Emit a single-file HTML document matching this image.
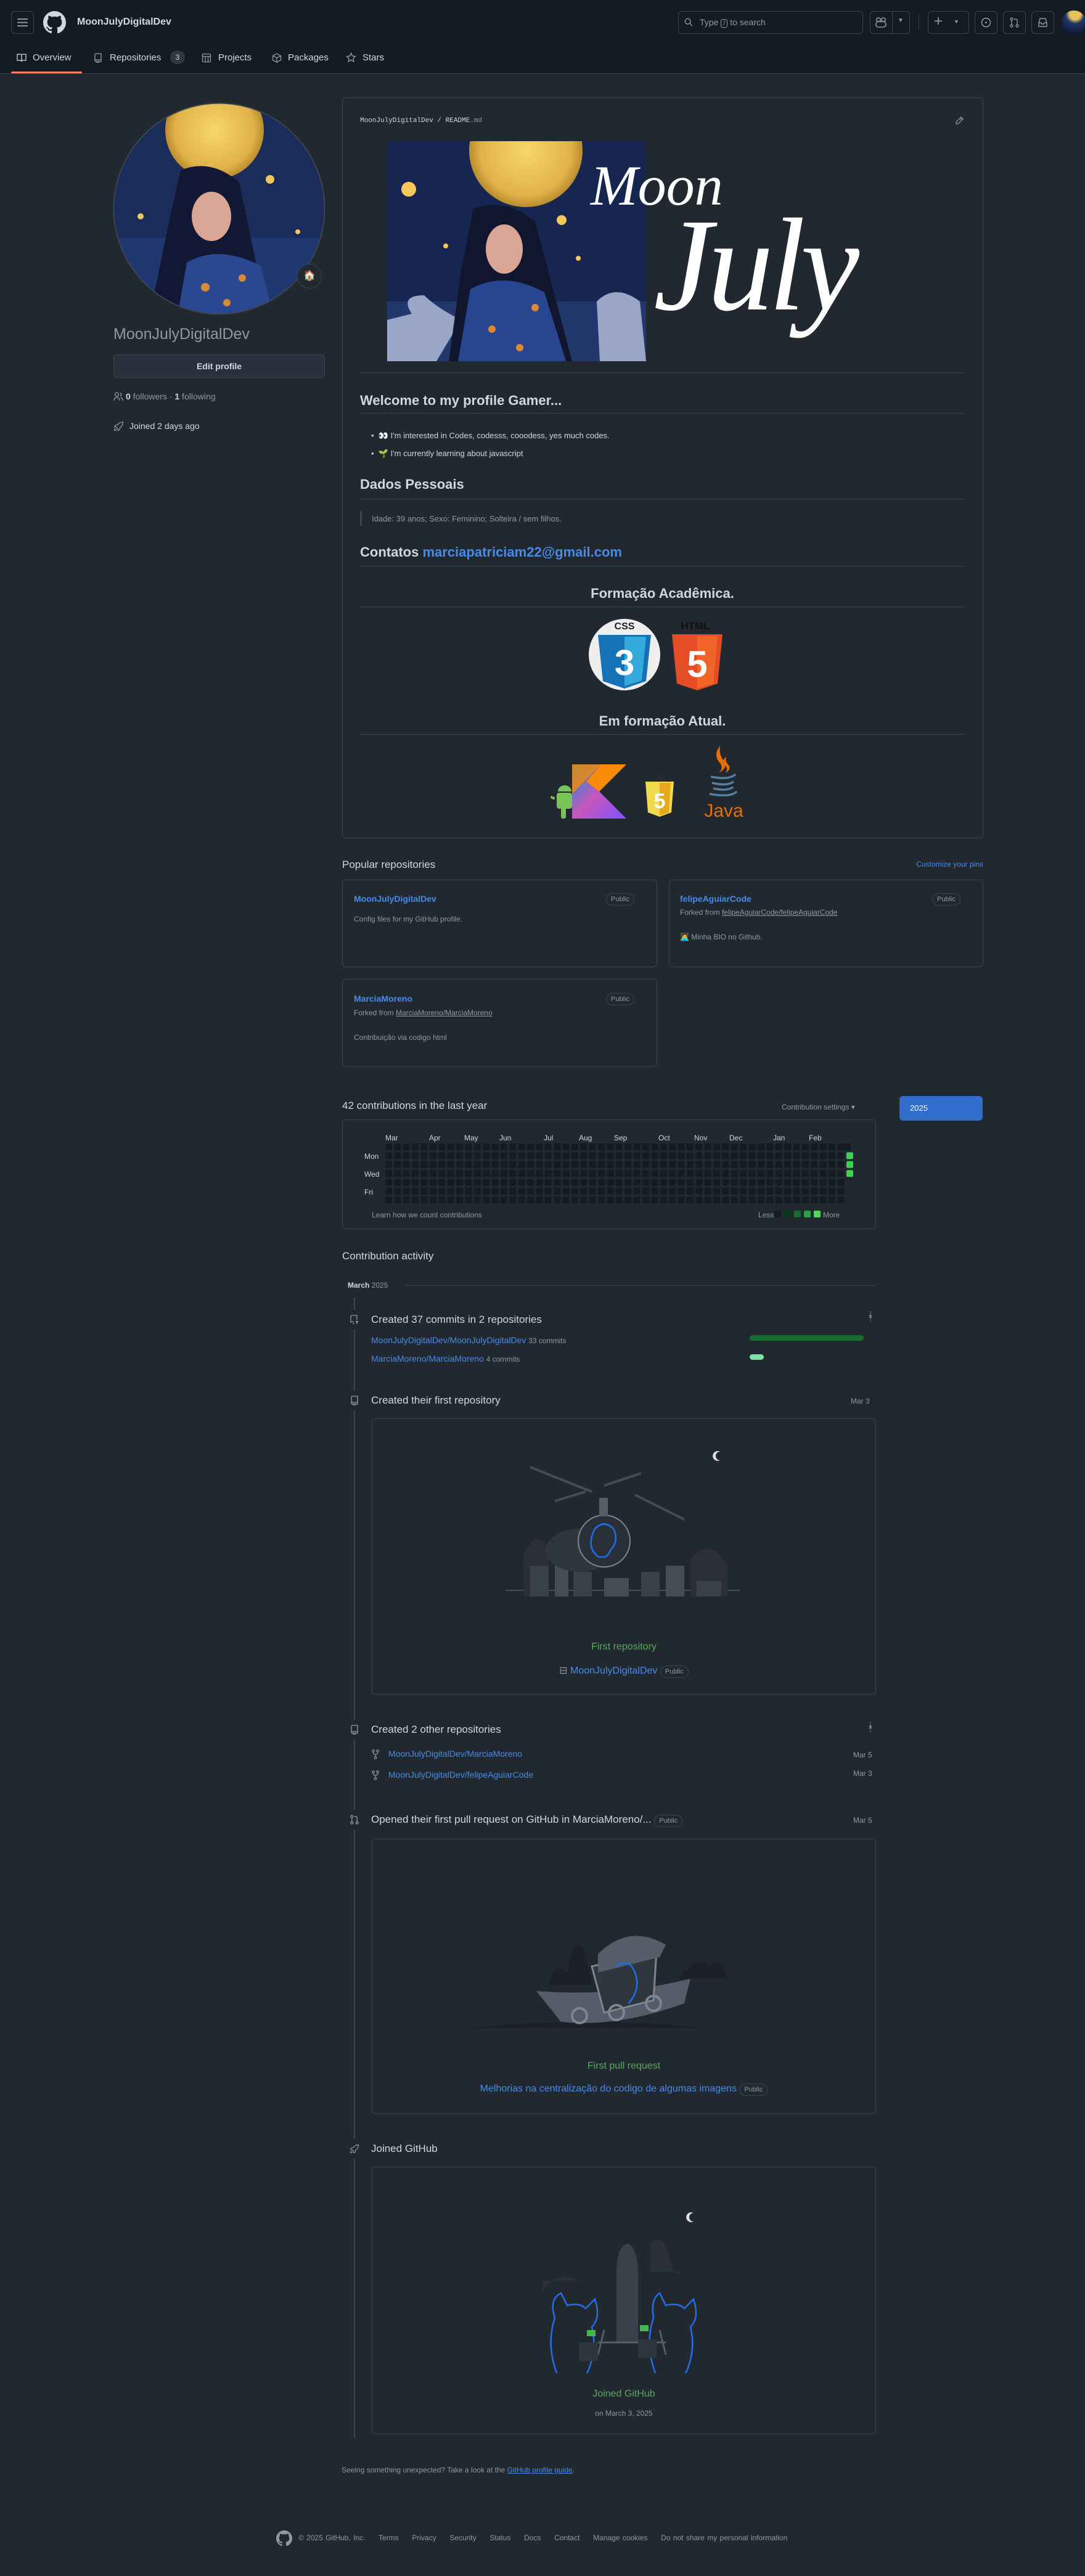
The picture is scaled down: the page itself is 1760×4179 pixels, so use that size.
<!DOCTYPE html>
<html><head><meta charset="utf-8">
<style>
*{box-sizing:border-box;margin:0;padding:0}
body{width:1760px;height:4179px;background:#212830;font-family:"Liberation Sans",sans-serif;color:#d1d7e0;position:relative;overflow:hidden}
.a{position:absolute}
a,.lnk{color:#478be6;text-decoration:none}
.muted{color:#9198a1}
.btn{border:1px solid #3d444d;border-radius:6px}
.box{border:1px solid #3d444d;border-radius:6px}
.badge{border:1px solid #3d444d;border-radius:12px;font-size:11px;color:#9198a1;padding:3px 7px}
.hr{position:absolute;height:1px;background:#3d444d}
.ti{position:absolute;width:32px;height:32px;border-radius:50%;background:#212830;left:559px}
</style></head><body>

<!-- header -->
<div class="a" style="left:0;top:0;width:1760px;height:120px;background:#151b23;border-bottom:1px solid #3d444d"></div>
<div class="a btn" style="left:18px;top:18px;width:37px;height:37px"></div>
<svg class="a" style="left:28px;top:29px" width="17" height="15" viewBox="0 0 17 15"><rect y="1" width="17" height="2" rx="1" fill="#9198a1"/><rect y="6.5" width="17" height="2" rx="1" fill="#9198a1"/><rect y="12" width="17" height="2" rx="1" fill="#9198a1"/></svg>
<svg class="a" style="left:70px;top:18px" width="37" height="37" viewBox="0 0 16 16"><path fill="#d1d7e0" d="M8 0C3.58 0 0 3.58 0 8c0 3.54 2.290 6.530 5.470 7.590.4.07.55-.17.55-.38 0-.19-.01-.82-.01-1.490-2.010.37-2.530-.49-2.690-.94-.09-.23-.48-.94-.82-1.130-.28-.15-.68-.52-.01-.53.63-.01 1.080.58 1.230.82.72 1.210 1.870.87 2.330.66.07-.52.28-.87.51-1.070-1.780-.2-3.640-.89-3.640-3.950 0-.87.31-1.590.82-2.150-.08-.2-.36-1.020.08-2.120 0 0 .67-.21 2.200.82.64-.18 1.320-.27 2-.27.68 0 1.360.09 2 .27 1.530-1.040 2.200-.82 2.200-.82.44 1.100.16 1.920.08 2.120.51.56.82 1.270.82 2.150 0 3.070-1.870 3.750-3.650 3.950.29.25.54.73.54 1.480 0 1.070-.01 1.930-.01 2.200 0 .21.15.46.55.38A8.013 8.013 0 0016 8c0-4.420-3.580-8-8-8z"/></svg>
<div class="a" style="left:125px;top:27px;font-size:16px;font-weight:bold;color:#d1d7e0">MoonJulyDigitalDev</div>
<div class="a btn" style="left:1100px;top:18px;width:300px;height:37px"></div>
<svg class="a" style="left:1110px;top:29px" width="14" height="14" viewBox="0 0 16 16"><circle cx="6.5" cy="6.5" r="5" stroke="#9198a1" stroke-width="1.6" fill="none"/><path d="M10.5 10.5 15 15" stroke="#9198a1" stroke-width="1.6"/></svg>
<div class="a muted" style="left:1135px;top:28px;font-size:14px">Type <span style="border:1px solid #9198a1;border-radius:3px;padding:0 3px;font-size:11px">/</span> to search</div>
<div class="a btn" style="left:1411px;top:18px;width:65px;height:37px"></div>
<div class="a" style="left:1447px;top:18px;width:1px;height:37px;background:#3d444d"></div>
<svg class="a" style="left:1420px;top:28px" width="18" height="17" viewBox="0 0 18 17"><rect x="2" y="1" width="6" height="6" rx="2.5" stroke="#9198a1" stroke-width="1.6" fill="none"/><rect x="10" y="1" width="6" height="6" rx="2.5" stroke="#9198a1" stroke-width="1.6" fill="none"/><rect x="1" y="7" width="16" height="9" rx="4" stroke="#9198a1" stroke-width="1.6" fill="none"/></svg>
<div class="a muted" style="left:1456px;top:28px;font-size:10px">▼</div>
<div class="a" style="left:1490px;top:25px;width:1px;height:23px;background:#3d444d"></div>
<div class="a btn" style="left:1505px;top:18px;width:67px;height:37px"></div>
<div class="a muted" style="left:1515px;top:21px;font-size:24px">+</div>
<div class="a muted" style="left:1547px;top:30px;font-size:9px">▼</div>
<div class="a btn" style="left:1581px;top:18px;width:37px;height:37px"></div>
<svg class="a" style="left:1591px;top:28px" width="17" height="17"><circle cx="8.5" cy="8.5" r="7" stroke="#9198a1" stroke-width="1.5" fill="none"/><circle cx="8.5" cy="8.5" r="1.5" fill="#9198a1"/></svg>
<div class="a btn" style="left:1627px;top:18px;width:37px;height:37px"></div>
<svg class="a" style="left:1637px;top:28px" width="17" height="17" viewBox="0 0 17 17"><circle cx="4" cy="3" r="2" stroke="#9198a1" stroke-width="1.4" fill="none"/><circle cx="4" cy="14" r="2" stroke="#9198a1" stroke-width="1.4" fill="none"/><circle cx="13" cy="14" r="2" stroke="#9198a1" stroke-width="1.4" fill="none"/><path d="M4 5v7M13 12V5.5Q13 3 10 3H8" stroke="#9198a1" stroke-width="1.4" fill="none"/></svg>
<div class="a btn" style="left:1673px;top:18px;width:37px;height:37px"></div>
<svg class="a" style="left:1683px;top:28px" width="17" height="17" viewBox="0 0 17 17"><path d="M2 9 4 2h9l2 7v6H2z M2 9h4l1 2h3l1-2h4" stroke="#9198a1" stroke-width="1.4" fill="none"/></svg>
<div class="a" style="left:1722px;top:17px;width:40px;height:40px;border-radius:50%;background:radial-gradient(circle at 55% 15%,#e8c35a 0 22%,#1f3566 38%,#0f1a35 80%)"></div>

<!-- tabs -->
<svg class="a" style="left:27px;top:86px" width="16" height="16" viewBox="0 0 16 16"><path d="M1 2h5a2 2 0 0 1 2 2v10a2 2 0 0 0-2-2H1zM15 2h-5a2 2 0 0 0-2 2v10a2 2 0 0 1 2-2h5z" stroke="#d1d7e0" stroke-width="1.3" fill="none"/></svg>
<div class="a" style="left:53px;top:85px;font-size:15px;color:#d1d7e0">Overview</div>
<svg class="a" style="left:151px;top:86px" width="16" height="16" viewBox="0 0 16 16"><path d="M3 13V2.5A1.5 1.5 0 0 1 4.5 1H13v10H4.5A1.5 1.5 0 0 0 3 12.5 1.5 1.5 0 0 0 4.5 14H6M9 14h4v-3M6 12v4l1.5-1 1.5 1v-4" stroke="#9198a1" stroke-width="1.3" fill="none"/></svg>
<div class="a" style="left:178px;top:85px;font-size:15px;color:#d1d7e0">Repositories</div>
<div class="a" style="left:276px;top:82px;width:24px;height:22px;border-radius:11px;background:#2f3742;font-size:12px;text-align:center;line-height:22px">3</div>
<svg class="a" style="left:327px;top:86px" width="16" height="16" viewBox="0 0 16 16"><rect x="1.5" y="1.5" width="13" height="13" rx="1.5" stroke="#9198a1" stroke-width="1.3" fill="none"/><path d="M1.5 5.5h13M6 5.5v9M10.5 5.5v9" stroke="#9198a1" stroke-width="1.3"/></svg>
<div class="a" style="left:354px;top:85px;font-size:15px;color:#d1d7e0">Projects</div>
<svg class="a" style="left:441px;top:86px" width="16" height="16" viewBox="0 0 16 16"><path d="M8 1 14.5 4.5v7L8 15 1.5 11.5v-7zM1.5 4.5 8 8l6.5-3.5M8 8v7" stroke="#9198a1" stroke-width="1.3" fill="none"/></svg>
<div class="a" style="left:467px;top:85px;font-size:15px;color:#d1d7e0">Packages</div>
<svg class="a" style="left:561px;top:85px" width="17" height="17" viewBox="0 0 16 16"><path d="M8 1.2l2 4.3 4.6.6-3.4 3.2.9 4.6L8 11.6l-4.1 2.3.9-4.6L1.4 6.1 6 5.5z" stroke="#9198a1" stroke-width="1.3" fill="none"/></svg>
<div class="a" style="left:588px;top:85px;font-size:15px;color:#d1d7e0">Stars</div>
<div class="a" style="left:18px;top:116px;width:115px;height:3px;background:#f78166;border-radius:2px"></div>

<!-- left column -->
<svg class="a" style="left:183px;top:166px" width="345" height="345" viewBox="0 0 345 345">
<defs><clipPath id="cav"><circle cx="172.5" cy="172.5" r="171"/></clipPath>
<radialGradient id="mn" cx="0.5" cy="0.5" r="0.5"><stop offset="0" stop-color="#f8d76a"/><stop offset="0.8" stop-color="#e0b24a"/><stop offset="1" stop-color="#b98c2e"/></radialGradient></defs>
<g clip-path="url(#cav)">
<rect width="345" height="345" fill="#1a2c5a"/>
<rect y="220" width="345" height="125" fill="#1f3870"/>
<circle cx="165" cy="45" r="80" fill="url(#mn)"/>
<circle cx="255" cy="125" r="7" fill="#f0c75a"/><circle cx="45" cy="185" r="5" fill="#f0c75a"/><circle cx="90" cy="270" r="4" fill="#f0c75a"/><circle cx="300" cy="210" r="4" fill="#f0c75a"/>
<path d="M110 110 Q160 90 205 130 L250 345 L60 345 L90 200 Z" fill="#121833"/>
<ellipse cx="160" cy="185" rx="32" ry="40" fill="#d9a594"/>
<path d="M120 160 Q160 115 205 160 L200 135 Q160 100 120 135Z" fill="#121833"/>
<path d="M120 260 Q170 230 240 265 L260 345 L105 345Z" fill="#2a4890"/>
<circle cx="150" cy="300" r="7" fill="#d98a36"/><circle cx="210" cy="285" r="6" fill="#d98a36"/><circle cx="185" cy="325" r="6" fill="#d98a36"/>
</g><circle cx="172.5" cy="172.5" r="171" fill="none" stroke="#3d444d" stroke-width="2"/></svg>
<div class="a" style="left:482px;top:428px;width:40px;height:40px;border-radius:50%;background:#212830;border:1px solid #3d444d;text-align:center;line-height:38px;font-size:16px">🏠</div>
<div class="a" style="left:184px;top:528px;font-size:25px;color:#9198a1;font-weight:300">MoonJulyDigitalDev</div>
<div class="a btn" style="left:184px;top:575px;width:343px;height:38px;background:#2a313c;text-align:center;line-height:36px;font-size:14px;font-weight:bold">Edit profile</div>
<svg class="a" style="left:184px;top:636px" width="16" height="15" viewBox="0 0 16 15"><circle cx="5.5" cy="4" r="3" stroke="#9198a1" stroke-width="1.3" fill="none"/><path d="M1 14q0-5 4.5-5t4.5 5M11 1.5a3 3 0 0 1 0 5.5M12 9q3 1 3 5" stroke="#9198a1" stroke-width="1.3" fill="none"/></svg>
<div class="a muted" style="left:204px;top:635px;font-size:14px"><b style="color:#d1d7e0">0</b> followers · <b style="color:#d1d7e0">1</b> following</div>
<svg class="a" style="left:184px;top:683px" width="17" height="17" viewBox="0 0 16 16"><path d="M14.5 1.5Q9 1.5 6 6L3 6.5 1.5 9l3 .5 2 2 .5 3 2.5-1.5.5-3q4.5-3 4.5-8.5zM3.5 11q-2 1-2 3.5 2.5 0 3.5-2" stroke="#9198a1" stroke-width="1.2" fill="none"/></svg>
<div class="a" style="left:210px;top:683px;font-size:14px;color:#d1d7e0">Joined 2 days ago</div>

<!-- README box -->
<div class="a box" style="left:555px;top:158px;width:1040px;height:1202px"></div>
<div class="a" style="left:584px;top:190px;font-family:'Liberation Mono',monospace;font-size:11px;color:#d1d7e0">MoonJulyDigitalDev / README<span class="muted">.md</span></div>
<svg class="a" style="left:1548px;top:188px" width="16" height="16" viewBox="0 0 16 16"><path d="M11 2l3 3-8 8H3v-3z M9.5 3.5l3 3" stroke="#9198a1" stroke-width="1.3" fill="none"/></svg>
<svg class="a" style="left:628px;top:229px" width="420" height="357" viewBox="0 0 420 357">
<rect width="420" height="357" fill="#172650"/>
<rect y="260" width="420" height="97" fill="#22376c"/>
<circle cx="225" cy="15" r="92" fill="url(#mn)"/>
<circle cx="35" cy="78" r="12" fill="#f5c85a"/><circle cx="283" cy="128" r="8" fill="#f5c85a"/><circle cx="95" cy="170" r="4" fill="#f5c85a"/><circle cx="310" cy="190" r="4" fill="#f5c85a"/>
<path d="M40 280 Q20 250 60 250 Q80 270 120 290 L80 357 L0 357 L0 290Z" fill="#9aa6c8"/>
<path d="M340 260 Q370 230 410 260 L420 357 L345 357Z" fill="#9aa6c8"/>
<path d="M140 110 Q190 90 240 130 L300 357 L100 357 L120 210Z" fill="#11162e"/>
<ellipse cx="190" cy="175" rx="30" ry="40" fill="#d9a594"/>
<path d="M150 155 Q190 110 235 155 L230 130 Q190 95 150 130Z" fill="#11162e"/>
<path d="M135 240 Q190 210 255 245 L290 357 L115 357Z" fill="#28468f"/>
<circle cx="170" cy="305" r="6" fill="#d98a36"/><circle cx="240" cy="270" r="6" fill="#d98a36"/><circle cx="215" cy="335" r="6" fill="#d98a36"/>
</svg>
<div class="a" style="left:958px;top:255px;font-family:'Liberation Serif',serif;font-style:italic;font-size:92px;color:#fff;line-height:1">Moon</div>
<div class="a" style="left:1060px;top:322px;font-family:'Liberation Serif',serif;font-style:italic;font-size:215px;color:#fff;line-height:1;letter-spacing:-8px">July</div>
<div class="hr" style="left:584px;top:604px;width:981px"></div>
<div class="a" style="left:584px;top:637px;font-size:22px;font-weight:bold;color:#d1d7e0">Welcome to my profile Gamer...</div>
<div class="hr" style="left:584px;top:670px;width:981px"></div>
<div class="a" style="left:602px;top:692px;font-size:13px;line-height:29px;color:#d1d7e0">• &nbsp;👀 I'm interested in Codes, codesss, cooodess, yes much codes.<br>• &nbsp;🌱 I'm currently learning about javascript</div>
<div class="a" style="left:584px;top:773px;font-size:22px;font-weight:bold">Dados Pessoais</div>
<div class="hr" style="left:584px;top:809px;width:981px"></div>
<div class="a" style="left:584px;top:829px;width:3px;height:24px;background:#3d444d"></div>
<div class="a muted" style="left:603px;top:834px;font-size:13px">Idade: 39 anos; Sexo: Feminino; Solteira / sem filhos.</div>
<div class="a" style="left:584px;top:883px;font-size:22px;font-weight:bold">Contatos <span class="lnk" style="font-weight:bold">marciapatriciam22@gmail.com</span></div>
<div class="hr" style="left:584px;top:918px;width:981px"></div>
<div class="a" style="left:584px;top:950px;width:981px;text-align:center;font-size:22px;font-weight:bold">Formação Acadêmica.</div>
<div class="hr" style="left:584px;top:984px;width:981px"></div>
<svg class="a" style="left:955px;top:1003px" width="225" height="118" viewBox="0 0 225 118">
<ellipse cx="58" cy="59" rx="58" ry="58" fill="#eee"/>
<text x="58" y="18" text-anchor="middle" font-family="Liberation Sans" font-weight="bold" font-size="16" fill="#222">CSS</text>
<path d="M15 27h86l-8 75-35 12-35-12z" fill="#1572b6"/><path d="M58 30v80l28-9 7-71z" fill="#33a9dc"/>
<text x="58" y="92" text-anchor="middle" font-family="Liberation Sans" font-weight="bold" font-size="58" fill="#fff">3</text>
<text x="173" y="18" text-anchor="middle" font-family="Liberation Sans" font-weight="bold" font-size="17" fill="#111">HTML</text>
<path d="M135 26h82l-8 80-33 11-33-11z" fill="#e44d26"/><path d="M176 29v85l26-8 7-77z" fill="#f16529"/>
<text x="176" y="95" text-anchor="middle" font-family="Liberation Sans" font-weight="bold" font-size="60" fill="#fff">5</text>
</svg>
<div class="a" style="left:584px;top:1157px;width:981px;text-align:center;font-size:22px;font-weight:bold">Em formação Atual.</div>
<div class="hr" style="left:584px;top:1191px;width:981px"></div>
<svg class="a" style="left:893px;top:1208px" width="335" height="122" viewBox="0 0 335 122">
<defs><linearGradient id="kt" x1="0" y1="0" x2="1" y2="1"><stop offset="0" stop-color="#0095d5"/><stop offset="0.5" stop-color="#c757bc"/><stop offset="1" stop-color="#7f52ff"/></linearGradient></defs>
<path d="M35 32h88L79 76l44 44H35z" fill="url(#kt)"/><path d="M35 32h47L35 80z" fill="#f88909" opacity=".8"/><path d="M82 32h41L79 76 58 60z" fill="#f88909"/>
<rect x="10" y="78" width="25" height="26" rx="4" fill="#78c257"/><path d="M12 76a11 10 0 0 1 22 0z" fill="#78c257"/><rect x="0" y="84" width="7" height="4" fill="#78c257" transform="rotate(25 3 86)"/><rect x="17" y="100" width="8" height="20" rx="3" fill="#78c257"/>
<path d="M154 60h46l-4 50-19 7-19-7z" fill="#f0db4f"/><path d="M177 62v53l15-5 3-48z" fill="#e6a91d"/>
<text x="177" y="103" text-anchor="middle" font-family="Liberation Sans" font-weight="bold" font-size="34" fill="#fff">5</text>
<text x="177" y="57" text-anchor="middle" font-family="Liberation Sans" font-weight="bold" font-size="9" fill="#333">JS</text>
<path d="M275 2q-12 15 0 28 6 8-2 16 16-9 8-20-8-9-6-24z" fill="#e76f00"/><path d="M285 20q-10 7 0 16 3 5-2 10 12-6 5-14-5-5-3-12z" fill="#e76f00"/>
<path d="M260 52q30 6 40-4M262 62q25 6 35-2M264 71q22 5 32-2M258 80q35 6 44-4" stroke="#5382a1" stroke-width="3.5" fill="none"/>
<text x="281" y="117" text-anchor="middle" font-family="Liberation Sans" font-size="30" fill="#e76f00">Java</text>
</svg>

<!-- Popular repos -->
<div class="a" style="left:555px;top:1393px;font-size:17px;color:#d1d7e0">Popular repositories</div>
<div class="a lnk" style="left:1400px;top:1395px;width:195px;text-align:right;font-size:12px">Customize your pins</div>
<div class="a box" style="left:555px;top:1427px;width:511px;height:142px"></div>
<div class="a lnk" style="left:574px;top:1450px;font-size:14px;font-weight:bold">MoonJulyDigitalDev</div>
<div class="a badge" style="left:983px;top:1449px">Public</div>
<div class="a muted" style="left:574px;top:1484px;font-size:12px">Config files for my GitHub profile.</div>
<div class="a box" style="left:1085px;top:1427px;width:510px;height:142px"></div>
<div class="a lnk" style="left:1103px;top:1450px;font-size:14px;font-weight:bold">felipeAguiarCode</div>
<div class="a badge" style="left:1512px;top:1449px">Public</div>
<div class="a muted" style="left:1103px;top:1473px;font-size:12px">Forked from <span style="text-decoration:underline">felipeAguiarCode/felipeAguiarCode</span></div>
<div class="a muted" style="left:1103px;top:1513px;font-size:12px">👩‍💻 Minha BIO no Github.</div>
<div class="a box" style="left:555px;top:1588px;width:511px;height:143px"></div>
<div class="a lnk" style="left:574px;top:1612px;font-size:14px;font-weight:bold">MarciaMoreno</div>
<div class="a badge" style="left:983px;top:1611px">Public</div>
<div class="a muted" style="left:574px;top:1636px;font-size:12px">Forked from <span style="text-decoration:underline">MarciaMoreno/MarciaMoreno</span></div>
<div class="a muted" style="left:574px;top:1676px;font-size:12px">Contribuição via codigo html</div>

<!-- contributions -->
<div class="a" style="left:555px;top:1784px;font-size:17px">42 contributions in the last year</div>
<div class="a muted" style="left:1268px;top:1789px;font-size:12px">Contribution settings ▾</div>
<div class="a" style="left:1459px;top:1778px;width:135px;height:40px;background:#316dca;border-radius:6px;color:#fff;font-size:13px;padding:12px 17px">2025</div>
<div class="a box" style="left:555px;top:1816px;width:866px;height:178px"></div>
<svg class="a" style="left:580px;top:1832px" width="830" height="150">
<defs><pattern id="cell" x="45" y="23" width="14.38" height="14.38" patternUnits="userSpaceOnUse"><rect width="11" height="11" rx="2" fill="#151b23"/></pattern></defs>
<g font-family="Liberation Sans" font-size="12" fill="#d1d7e0">
<text x="45" y="18">Mar</text><text x="116" y="18">Apr</text><text x="173" y="18">May</text><text x="230" y="18">Jun</text><text x="302" y="18">Jul</text><text x="359" y="18">Aug</text><text x="416" y="18">Sep</text><text x="488" y="18">Oct</text><text x="546" y="18">Nov</text><text x="603" y="18">Dec</text><text x="674" y="18">Jan</text><text x="732" y="18">Feb</text>
<text x="11" y="48">Mon</text><text x="11" y="77">Wed</text><text x="11" y="106">Fri</text></g>
<rect x="45" y="23" width="748" height="101" fill="url(#cell)"/>
<rect x="789" y="23" width="14" height="14" fill="#212830"/>
<rect x="789" y="23" width="11" height="11" rx="2" fill="#151b23"/>
<rect x="793" y="37.4" width="11" height="11" rx="2" fill="#39d353"/><rect x="793" y="51.8" width="11" height="11" rx="2" fill="#39d353"/><rect x="793" y="66.2" width="11" height="11" rx="2" fill="#39d353"/>
<text x="23" y="143" font-family="Liberation Sans" font-size="12" fill="#9198a1">Learn how we count contributions</text>
<text x="650" y="143" font-family="Liberation Sans" font-size="12" fill="#9198a1">Less</text>
<rect x="676" y="132" width="11" height="11" rx="2" fill="#151b23"/><rect x="692" y="132" width="11" height="11" rx="2" fill="#033a16"/><rect x="708" y="132" width="11" height="11" rx="2" fill="#196c2e"/><rect x="724" y="132" width="11" height="11" rx="2" fill="#2ea043"/><rect x="740" y="132" width="11" height="11" rx="2" fill="#56d364"/>
<text x="755" y="143" font-family="Liberation Sans" font-size="12" fill="#9198a1">More</text>
</svg>

<!-- activity -->
<div class="a" style="left:555px;top:2028px;font-size:17px">Contribution activity</div>
<div class="a" style="left:564px;top:2078px;font-size:12px;font-weight:bold">March <span class="muted" style="font-weight:normal">2025</span></div>
<div class="hr" style="left:658px;top:2085px;width:763px"></div>
<div class="a" style="left:574px;top:2105px;width:2px;height:1850px;background:#3d444d"></div>

<div class="ti" style="top:2125px"></div>
<svg class="a" style="left:567px;top:2133px" width="16" height="16" viewBox="0 0 16 16"><path d="M2 13V2.5A1.5 1.5 0 0 1 3.5 1H12v7M2 12.5A1.5 1.5 0 0 1 3.5 11H7M5 14h3M12 15V10M10 12l2-2 2 2" stroke="#9198a1" stroke-width="1.3" fill="none"/></svg>
<div class="a" style="left:602px;top:2131px;font-size:17px">Created 37 commits in 2 repositories</div>
<div class="a muted" style="left:1407px;top:2128px;font-size:12px;line-height:8px">⇣<br>⇡</div>
<div class="a lnk" style="left:602px;top:2166px;font-size:14px">MoonJulyDigitalDev/MoonJulyDigitalDev <span class="muted" style="font-size:12px">33 commits</span></div>
<div class="a" style="left:1216px;top:2166px;width:185px;height:9px;border-radius:5px;background:#196c2e"></div>
<div class="a lnk" style="left:602px;top:2196px;font-size:14px">MarciaMoreno/MarciaMoreno <span class="muted" style="font-size:12px">4 commits</span></div>
<div class="a" style="left:1216px;top:2197px;width:23px;height:9px;border-radius:5px;background:#7ee2a8"></div>

<div class="ti" style="top:2256px"></div>
<svg class="a" style="left:567px;top:2264px" width="16" height="16" viewBox="0 0 16 16"><path d="M3 13V2.5A1.5 1.5 0 0 1 4.5 1H13v10H4.5A1.5 1.5 0 0 0 3 12.5 1.5 1.5 0 0 0 4.5 14H6M9 14h4v-3M6 12v4l1.5-1 1.5 1v-4" stroke="#9198a1" stroke-width="1.3" fill="none"/></svg>
<div class="a" style="left:602px;top:2262px;font-size:17px">Created their first repository</div>
<div class="a muted" style="left:1380px;top:2266px;font-size:12px">Mar 3</div>
<div class="a box" style="left:603px;top:2301px;width:818px;height:448px"></div>
<svg class="a" style="left:800px;top:2350px" width="400" height="260" viewBox="0 0 400 260">
<path d="M368 5a8 8 0 1 0 0 14 6 6 0 1 1 0-14z" fill="#ddd"/>
<path d="M20 230h390" stroke="#444c56" stroke-width="2"/>
<path d="M50 240V170q20-40 40-10v80zM320 240V180q30-40 60 10v50z" fill="#2b3038"/>
<rect x="60" y="190" width="30" height="50" fill="#3a414b"/><rect x="100" y="180" width="22" height="60" fill="#444c56"/><rect x="130" y="200" width="30" height="40" fill="#3a414b"/><rect x="180" y="210" width="40" height="30" fill="#444c56"/><rect x="240" y="200" width="30" height="40" fill="#3a414b"/><rect x="280" y="190" width="30" height="50" fill="#444c56"/><rect x="330" y="215" width="40" height="25" fill="#3a414b"/>
<path d="M60 30l100 40M180 60l60-20M230 75l80 40M100 85l50-15" stroke="#444c56" stroke-width="4"/>
<ellipse cx="140" cy="165" rx="55" ry="35" fill="#30363d"/>
<circle cx="180" cy="150" r="42" fill="#2a3039" stroke="#7d8590" stroke-width="2"/>
<path d="M165 130q15-15 30 0q10 20-5 35q-5 15-20 10q-20-15-5-45z" stroke="#1f6feb" stroke-width="2.5" fill="none"/>
<rect x="172" y="80" width="14" height="30" fill="#545d68"/>
</svg>
<div class="a" style="left:603px;top:2663px;width:818px;text-align:center;font-size:16px;color:#57ab5a">First repository</div>
<div class="a" style="left:603px;top:2700px;width:818px;text-align:center;font-size:16px"><span class="muted">⊟</span> <span class="lnk">MoonJulyDigitalDev</span> <span class="badge">Public</span></div>

<div class="ti" style="top:2790px"></div>
<svg class="a" style="left:567px;top:2798px" width="16" height="16" viewBox="0 0 16 16"><path d="M3 13V2.5A1.5 1.5 0 0 1 4.5 1H13v10H4.5A1.5 1.5 0 0 0 3 12.5 1.5 1.5 0 0 0 4.5 14H6M9 14h4v-3M6 12v4l1.5-1 1.5 1v-4" stroke="#9198a1" stroke-width="1.3" fill="none"/></svg>
<div class="a" style="left:602px;top:2796px;font-size:17px">Created 2 other repositories</div>
<div class="a muted" style="left:1407px;top:2794px;font-size:12px;line-height:8px">⇣<br>⇡</div>
<svg class="a" style="left:603px;top:2838px" width="12" height="16" viewBox="0 0 12 16"><circle cx="2.5" cy="2.5" r="1.8" stroke="#9198a1" stroke-width="1.2" fill="none"/><circle cx="9.5" cy="2.5" r="1.8" stroke="#9198a1" stroke-width="1.2" fill="none"/><circle cx="6" cy="13.5" r="1.8" stroke="#9198a1" stroke-width="1.2" fill="none"/><path d="M2.5 4.5v1.5q0 2 3.5 2t3.5-2V4.5M6 8v3.5" stroke="#9198a1" stroke-width="1.2" fill="none"/></svg>
<div class="a lnk" style="left:630px;top:2837px;font-size:14px">MoonJulyDigitalDev/MarciaMoreno</div>
<div class="a muted" style="left:1384px;top:2840px;font-size:12px">Mar 5</div>
<svg class="a" style="left:603px;top:2872px" width="12" height="16" viewBox="0 0 12 16"><circle cx="2.5" cy="2.5" r="1.8" stroke="#9198a1" stroke-width="1.2" fill="none"/><circle cx="9.5" cy="2.5" r="1.8" stroke="#9198a1" stroke-width="1.2" fill="none"/><circle cx="6" cy="13.5" r="1.8" stroke="#9198a1" stroke-width="1.2" fill="none"/><path d="M2.5 4.5v1.5q0 2 3.5 2t3.5-2V4.5M6 8v3.5" stroke="#9198a1" stroke-width="1.2" fill="none"/></svg>
<div class="a lnk" style="left:630px;top:2871px;font-size:14px">MoonJulyDigitalDev/felipeAguiarCode</div>
<div class="a muted" style="left:1384px;top:2870px;font-size:12px">Mar 3</div>

<div class="ti" style="top:2936px"></div>
<svg class="a" style="left:567px;top:2944px" width="16" height="16" viewBox="0 0 17 17"><circle cx="4" cy="3" r="2" stroke="#9198a1" stroke-width="1.4" fill="none"/><circle cx="4" cy="14" r="2" stroke="#9198a1" stroke-width="1.4" fill="none"/><circle cx="13" cy="14" r="2" stroke="#9198a1" stroke-width="1.4" fill="none"/><path d="M4 5v7M13 12V5.5Q13 3 10 3H8" stroke="#9198a1" stroke-width="1.4" fill="none"/></svg>
<div class="a" style="left:602px;top:2942px;font-size:17px">Opened their first pull request on GitHub in MarciaMoreno/... <span class="badge">Public</span></div>
<div class="a muted" style="left:1384px;top:2946px;font-size:12px">Mar 5</div>
<div class="a box" style="left:603px;top:2983px;width:818px;height:447px"></div>
<svg class="a" style="left:750px;top:3060px" width="430" height="230" viewBox="0 0 430 230">
<path d="M125 8a9 9 0 1 0 0 18 7 7 0 1 1 0-18z" fill="#ddd"/>
<path d="M140 160q10-40 30-20q20-100 40 20zM430 150q-10-40-30-20q-20-20-50 20z" fill="#1c2128"/>
<path d="M10 230q200-20 380 0z" fill="#1c2128"/>
<path d="M120 170l40 50q90 10 200-30l10-40q-120 30-250 20z" fill="#545d68"/>
<path d="M210 130l20 75 80-20 5-80z" fill="#30363d" stroke="#7d8590" stroke-width="3"/>
<path d="M220 110q50-50 110-15l-10 20-100 25z" fill="#545d68"/>
<path d="M250 130q20-15 30 10t-10 50" stroke="#1f6feb" stroke-width="2.5" fill="none"/>
<circle cx="190" cy="210" r="12" fill="none" stroke="#7d8590" stroke-width="4"/><circle cx="250" cy="205" r="12" fill="none" stroke="#7d8590" stroke-width="4"/><circle cx="310" cy="190" r="12" fill="none" stroke="#7d8590" stroke-width="4"/>
</svg>
<div class="a" style="left:603px;top:3343px;width:818px;text-align:center;font-size:16px;color:#57ab5a">First pull request</div>
<div class="a" style="left:603px;top:3380px;width:818px;text-align:center;font-size:16px"><span class="lnk">Melhorias na centralização do codigo de algumas imagens</span> <span class="badge">Public</span></div>

<div class="ti" style="top:3470px"></div>
<svg class="a" style="left:567px;top:3478px" width="16" height="16" viewBox="0 0 16 16"><path d="M14.5 1.5Q9 1.5 6 6L3 6.5 1.5 9l3 .5 2 2 .5 3 2.5-1.5.5-3q4.5-3 4.5-8.5zM3.5 11q-2 1-2 3.5 2.5 0 3.5-2" stroke="#9198a1" stroke-width="1.2" fill="none"/></svg>
<div class="a" style="left:602px;top:3476px;font-size:17px">Joined GitHub</div>
<div class="a box" style="left:603px;top:3515px;width:818px;height:434px"></div>
<svg class="a" style="left:870px;top:3580px" width="280" height="270" viewBox="0 0 280 270">
<path d="M255 10a8 8 0 1 0 0 14 6 6 0 1 1 0-14z" fill="#ddd"/>
<path d="M150 60q-20 0-20 50l0 110h35l0-110q0-40-15-50z" fill="#3a414b"/>
<path d="M185 60q20-20 30 20t20 25l-50 0z M10 140q20-40 60-20h-60z" fill="#2b3038"/>
<path d="M100 220h110M110 200l-10 40M200 200l10 40" stroke="#545d68" stroke-width="3"/>
<path d="M30 180q-10-30 10-40l10 20q20-5 30 5l15-15q10 30-5 45q10 40-10 80h-45q-20-50 -5-95z" fill="none" stroke="#1f6feb" stroke-width="2.5"/>
<path d="M190 180q-5-30 10-40l10 20q20-5 30 5l15-15q10 30-5 45q10 40-10 80h-45q-20-50 -5-95z" fill="none" stroke="#1f6feb" stroke-width="2.5"/>
<rect x="70" y="220" width="30" height="30" fill="#30363d"/><rect x="165" y="215" width="30" height="30" fill="#30363d"/>
<rect x="82" y="200" width="14" height="10" fill="#3fb950"/><rect x="168" y="192" width="14" height="10" fill="#3fb950"/>
</svg>
<div class="a" style="left:603px;top:3875px;width:818px;text-align:center;font-size:16px;color:#57ab5a">Joined GitHub</div>
<div class="a muted" style="left:603px;top:3908px;width:818px;text-align:center;font-size:12px">on March 3, 2025</div>

<!-- footer -->
<div class="a muted" style="left:554px;top:4000px;font-size:12px">Seeing something unexpected? Take a look at the <span class="lnk" style="text-decoration:underline">GitHub profile guide</span>.</div>
<svg class="a" style="left:448px;top:4105px" width="26" height="26" viewBox="0 0 16 16"><path fill="#9198a1" d="M8 0C3.58 0 0 3.58 0 8c0 3.54 2.290 6.530 5.470 7.590.4.07.55-.17.55-.38 0-.19-.01-.82-.01-1.490-2.010.37-2.530-.49-2.690-.94-.09-.23-.48-.94-.82-1.130-.28-.15-.68-.52-.01-.53.63-.01 1.080.58 1.230.82.72 1.210 1.870.87 2.330.66.07-.52.28-.87.51-1.070-1.780-.2-3.640-.89-3.640-3.950 0-.87.31-1.590.82-2.150-.08-.2-.36-1.020.08-2.120 0 0 .67-.21 2.200.82.64-.18 1.320-.27 2-.27.68 0 1.360.09 2 .27 1.530-1.040 2.200-.82 2.200-.82.44 1.100.16 1.920.08 2.120.51.56.82 1.270.82 2.150 0 3.070-1.870 3.750-3.650 3.950.29.25.54.73.54 1.480 0 1.070-.01 1.930-.01 2.200 0 .21.15.46.55.38A8.013 8.013 0 0016 8c0-4.420-3.580-8-8-8z"/></svg>
<div class="a muted" style="left:484px;top:4110px;font-size:12px;word-spacing:1px">© 2025 GitHub, Inc. &nbsp;&nbsp;&nbsp; Terms &nbsp;&nbsp;&nbsp; Privacy &nbsp;&nbsp;&nbsp; Security &nbsp;&nbsp;&nbsp; Status &nbsp;&nbsp;&nbsp; Docs &nbsp;&nbsp;&nbsp; Contact &nbsp;&nbsp;&nbsp; Manage cookies &nbsp;&nbsp;&nbsp; Do not share my personal information</div>
</body></html>
